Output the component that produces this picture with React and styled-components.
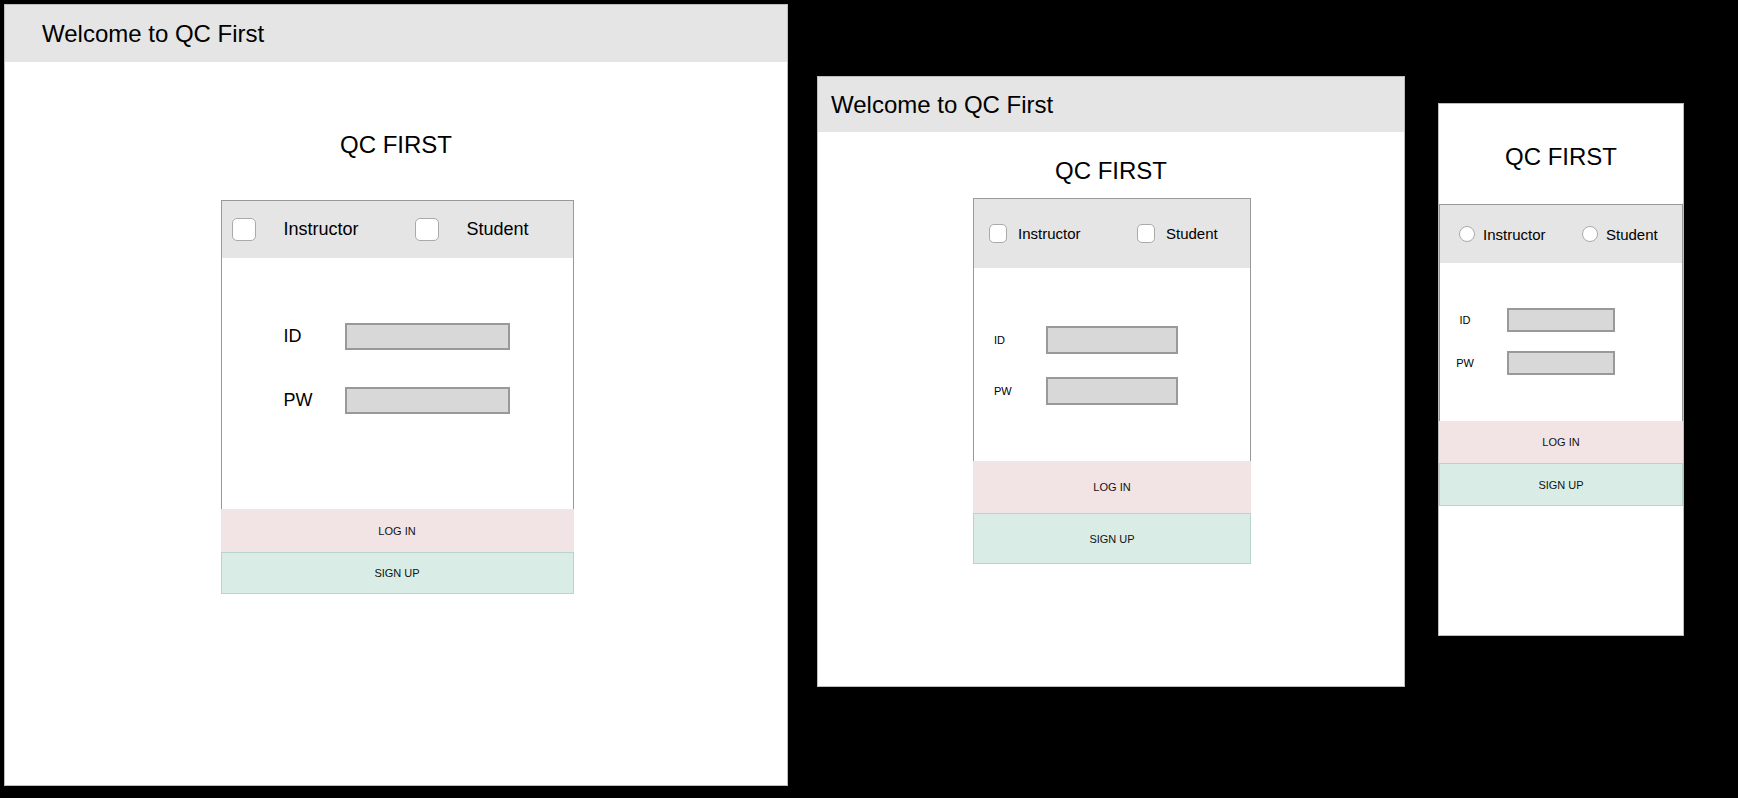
import React from 'react';
import styled, { createGlobalStyle } from 'styled-components';

const GlobalStyle = createGlobalStyle`
  html, body {
    margin: 0;
    padding: 0;
    background: #000;
  }
  body {
    font-family: 'Liberation Sans', Arial, sans-serif;
    color: #000;
  }
  * {
    box-sizing: border-box;
  }
`;

// measurements for the three mockup sizes (desktop, tablet, phone)
const sizes = {
  lg: {
    w: 784, h: 782, ml: 0, mt: 4,
    headerH: 57, headerPl: 37,
    titleMt: 69, cardMt: 41, cardW: 353, cardShift: 2,
    barH: 57, barPl: 10, boxW: 24, boxH: 23, round: false,
    optW: 183, optGap: 28, optFont: 18,
    bodyH: 251, bodyPt: 65, rowGap: 37,
    labelPl: 62, labelW: 61, labelFont: 18, labelAlign: 'left',
    inputW: 165, inputH: 27,
    loginH: 43, signupH: 42,
  },
  md: {
    w: 588, h: 611, ml: 29, mt: 76,
    headerH: 55, headerPl: 13,
    titleMt: 25, cardMt: 13, cardW: 278, cardShift: 2,
    barH: 69, barPl: 15, boxW: 18, boxH: 19, round: false,
    optW: 148, optGap: 11, optFont: 15,
    bodyH: 193, bodyPt: 58, rowGap: 23,
    labelPl: 20, labelW: 52, labelFont: 11, labelAlign: 'left',
    inputW: 132, inputH: 28,
    loginH: 52, signupH: 51,
  },
  sm: {
    w: 246, h: 533, ml: 33, mt: 103,
    headerH: 0,
    titleMt: 39, cardMt: 33, cardW: 244, cardShift: 0,
    barH: 58, barPl: 19, boxW: 16, boxH: 16, round: true,
    optW: 123, optGap: 8, optFont: 15,
    bodyH: 158, bodyPt: 45, rowGap: 19,
    labelPl: 0, labelW: 50, labelFont: 11, labelAlign: 'center',
    inputW: 108, inputH: 24,
    loginH: 42, signupH: 43,
  },
};

const Page = styled.div`
  display: flex;
  align-items: flex-start;
  min-height: 798px;
  padding-left: 4px;
  background: #000;
`;

const Frame = styled.section`
  display: flex;
  flex-direction: column;
  align-items: center;
  flex-shrink: 0;
  width: ${(p) => p.$s.w}px;
  height: ${(p) => p.$s.h}px;
  margin-left: ${(p) => p.$s.ml}px;
  margin-top: ${(p) => p.$s.mt}px;
  background: #fff;
  border: 1px solid #bdbdbd;
`;

const Header = styled.header`
  display: flex;
  align-items: center;
  align-self: stretch;
  height: ${(p) => p.$s.headerH}px;
  padding-left: ${(p) => p.$s.headerPl}px;
  background: #e5e5e5;
  font-size: 24px;
`;

const Title = styled.h1`
  margin: ${(p) => p.$s.titleMt}px 0 0;
  font-size: 24px;
  font-weight: normal;
  line-height: 28px;
`;

const Card = styled.div`
  display: flex;
  flex-direction: column;
  width: ${(p) => p.$s.cardW}px;
  margin-top: ${(p) => p.$s.cardMt}px;
  margin-left: ${(p) => p.$s.cardShift}px;
`;

const Panel = styled.div`
  border: 1px solid #999;
  border-bottom: none;
`;

const OptionBar = styled.div`
  display: flex;
  align-items: center;
  height: ${(p) => p.$s.barH}px;
  padding-left: ${(p) => p.$s.barPl}px;
  background: #e5e5e5;
`;

const Option = styled.label`
  display: flex;
  align-items: center;
  flex-shrink: 0;
  width: ${(p) => p.$s.optW}px;
  font-size: ${(p) => p.$s.optFont}px;

  &:last-child {
    width: auto;
  }
`;

const Check = styled.input.attrs({ type: 'checkbox' })`
  appearance: none;
  flex-shrink: 0;
  margin: 0 ${(p) => p.$s.optGap}px 0 0;
  width: ${(p) => p.$s.boxW}px;
  height: ${(p) => p.$s.boxH}px;
  border: 1px solid #aaa;
  border-radius: ${(p) => (p.$s.round ? '50%' : '5px')};
  background: #fff;
`;

const Body = styled.div`
  display: flex;
  flex-direction: column;
  gap: ${(p) => p.$s.rowGap}px;
  height: ${(p) => p.$s.bodyH}px;
  padding-top: ${(p) => p.$s.bodyPt}px;
  padding-left: ${(p) => p.$s.labelPl}px;
  background: #fff;
`;

const Row = styled.div`
  display: flex;
  align-items: center;
`;

const Label = styled.span`
  width: ${(p) => p.$s.labelW}px;
  font-size: ${(p) => p.$s.labelFont}px;
  text-align: ${(p) => p.$s.labelAlign};
  ${(p) => (p.$s.labelAlign === 'center' ? 'margin-right: 17px;' : '')}
`;

const Field = styled.input`
  width: ${(p) => p.$s.inputW}px;
  height: ${(p) => p.$s.inputH}px;
  margin: 0;
  padding: 0 4px;
  background: #d8d8d8;
  border: 2px solid #999;
  outline: none;
`;

const ActionButton = styled.button`
  display: block;
  width: 100%;
  height: ${(p) => p.$h}px;
  margin: 0;
  padding: 0;
  font-family: 'Liberation Sans', Arial, sans-serif;
  font-size: 11px;
  color: #111;
  background: ${(p) => (p.$kind === 'login' ? '#f2e4e4' : '#d9ede6')};
  border: ${(p) => (p.$kind === 'login' ? 'none' : '1px solid #b8d5cb')};
  cursor: pointer;
`;

function LoginMock({ size }) {
  const s = sizes[size];
  return (
    <Frame $s={s}>
      {s.headerH > 0 && <Header $s={s}>Welcome to QC First</Header>}
      <Title $s={s}>QC FIRST</Title>
      <Card $s={s}>
        <Panel>
          <OptionBar $s={s}>
            <Option $s={s}>
              <Check $s={s} />
              Instructor
            </Option>
            <Option $s={s}>
              <Check $s={s} />
              Student
            </Option>
          </OptionBar>
          <Body $s={s}>
            <Row>
              <Label $s={s}>ID</Label>
              <Field $s={s} />
            </Row>
            <Row>
              <Label $s={s}>PW</Label>
              <Field $s={s} type="password" />
            </Row>
          </Body>
        </Panel>
        <ActionButton $kind="login" $h={s.loginH}>LOG IN</ActionButton>
        <ActionButton $kind="signup" $h={s.signupH}>SIGN UP</ActionButton>
      </Card>
    </Frame>
  );
}

export default function App() {
  return (
    <>
      <GlobalStyle />
      <Page>
        <LoginMock size="lg" />
        <LoginMock size="md" />
        <LoginMock size="sm" />
      </Page>
    </>
  );
}
